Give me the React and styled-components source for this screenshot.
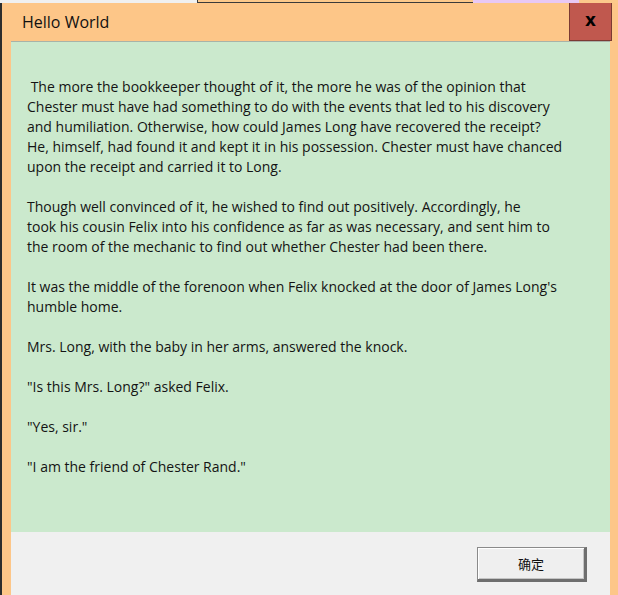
import React from 'react';
import styled, { createGlobalStyle } from 'styled-components';

const GlobalStyle = createGlobalStyle`
  html, body {
    margin: 0;
    padding: 0;
    background: #f0f0f0;
  }
`;

const Page = styled.div`
  width: 618px;
  height: 595px;
  overflow: hidden;
  display: flex;
  flex-direction: column;
`;

// what shows of the desktop behind the dialog
const Desktop = styled.div`
  display: flex;
  height: 3px;
  flex-shrink: 0;
`;
const DesktopPart = styled.div`
  width: ${(p) => p.w}px;
  flex-grow: ${(p) => (p.grow ? 1 : 0)};
  background: ${(p) => p.bg};
  border-left: ${(p) => (p.edge ? '1px solid #3a3a3a' : 'none')};
  border-bottom: ${(p) => (p.edge ? '1px solid #3a3a3a' : 'none')};
  box-sizing: border-box;
`;

const Window = styled.div`
  flex: 1;
  display: flex;
  flex-direction: column;
  background: #fdc688;
  border-left: 2px solid #2d2d2d;
  padding: 0 8px 0 9px;
  min-height: 0;
`;

const TitleBar = styled.div`
  height: 38px;
  display: flex;
  align-items: stretch;
  justify-content: space-between;
  flex-shrink: 0;
  margin-right: -2px;
`;

const Title = styled.div`
  font-family: 'Open Sans', 'Noto Sans', sans-serif;
  font-size: 16px;
  color: #111;
  padding-left: 11px;
  display: flex;
  align-items: center;
  padding-bottom: 1px;
`;

const CloseButton = styled.div`
  width: 43px;
  background: #c0584e;
  border: 1px solid #7b3a33;
  border-top: none;
  box-sizing: border-box;
  display: flex;
  align-items: center;
  justify-content: center;
  font-family: 'DejaVu Sans', sans-serif;
  font-weight: bold;
  font-size: 17px;
  color: #000;
  padding-bottom: 3px;
`;

const Content = styled.div`
  height: 491px;
  flex-shrink: 0;
  background: #cbe9cd;
  border-top: 1px solid #a8b3a8;
  box-sizing: border-box;
  padding: 35px 16px 0 16px;
`;

const Para = styled.p`
  margin: 0 0 20px 0;
  font-family: 'Open Sans', 'Noto Sans', sans-serif;
  font-size: 14px;
  line-height: 20px;
  color: #141414;
  white-space: pre;
`;

const Footer = styled.div`
  flex: 1;
  background: #f0f0f0;
  display: flex;
  justify-content: flex-end;
  align-items: flex-start;
  padding: 15px 23px 0 0;
`;

const OkButton = styled.button`
  width: 110px;
  height: 35px;
  box-sizing: border-box;
  background: #efefef;
  border: 1px solid #8a8a8a;
  border-right: 3px solid #6e6e6e;
  border-bottom: 3px solid #6e6e6e;
  box-shadow: inset 1px 1px 0 #ffffff, inset -1px -1px 0 #c4c4c4;
  font-family: 'Noto Sans CJK SC', sans-serif;
  font-size: 13px;
  color: #111;
  padding: 0;
  cursor: pointer;
`;

const paragraphs = [
  ' The more the bookkeeper thought of it, the more he was of the opinion that\nChester must have had something to do with the events that led to his discovery\nand humiliation. Otherwise, how could James Long have recovered the receipt?\nHe, himself, had found it and kept it in his possession. Chester must have chanced\nupon the receipt and carried it to Long.',
  'Though well convinced of it, he wished to find out positively. Accordingly, he\ntook his cousin Felix into his confidence as far as was necessary, and sent him to\nthe room of the mechanic to find out whether Chester had been there.',
  "It was the middle of the forenoon when Felix knocked at the door of James Long's\nhumble home.",
  'Mrs. Long, with the baby in her arms, answered the knock.',
  '"Is this Mrs. Long?" asked Felix.',
  '"Yes, sir."',
  '"I am the friend of Chester Rand."',
];

const App = () => {
  return (
    <Page>
      <GlobalStyle />
      <Desktop>
        <DesktopPart w={197} bg="#f0f0f0" />
        <DesktopPart w={276} bg="#fcc98b" edge />
        <DesktopPart w={106} bg="#e8c8f4" />
        <DesktopPart grow bg="#fcc98b" />
      </Desktop>
      <Window>
        <TitleBar>
          <Title>Hello World</Title>
          <CloseButton>x</CloseButton>
        </TitleBar>
        <Content>
          {paragraphs.map((text, i) => (
            <Para key={i}>{text}</Para>
          ))}
        </Content>
        <Footer>
          <OkButton>确定</OkButton>
        </Footer>
      </Window>
    </Page>
  );
};

export default App;
